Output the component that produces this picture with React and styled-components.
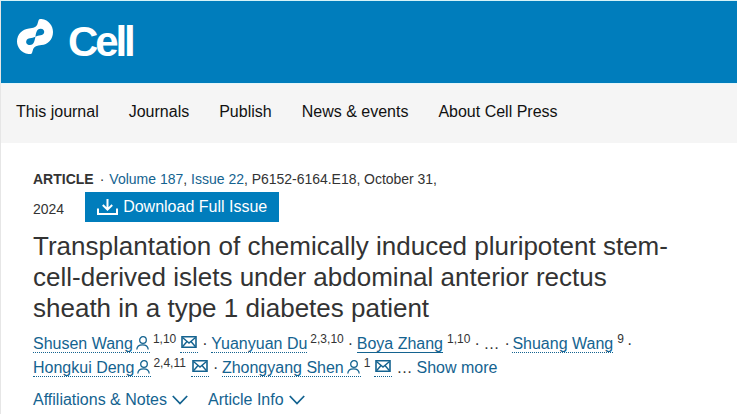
import React from "react";
import styled, { createGlobalStyle } from "styled-components";

const colors = {
  brand: "#007dbc",
  link: "#146390",
  text: "#333333",
  nav: "#f5f5f5",
};

const GlobalStyle = createGlobalStyle`
  * { box-sizing: border-box; }
  body {
    margin: 0;
    background: #fff;
    color: ${colors.text};
    font-family: "Liberation Sans", Arial, sans-serif;
  }
`;

const Page = styled.div`
  width: 737px;
  height: 414px;
  overflow: hidden;
  border-left: 1px solid #e6e6e6;
  border-top: 1px solid #d5f3f8;
`;

const Header = styled.header`
  display: flex;
  align-items: flex-start;
  height: 82px;
  padding: 17px 0 0 15px;
  background: ${colors.brand};
  color: #fff;
`;

const Brand = styled.span`
  margin: 2px 0 0 14px;
  font-size: 42px;
  font-weight: 700;
  line-height: 44px;
  letter-spacing: -3.1px;
`;

const Nav = styled.nav`
  display: flex;
  gap: 30px;
  height: 60px;
  padding: 19px 0 0 15px;
  background: ${colors.nav};
  border-top: 1px solid #e4f6fa;
`;

const NavLink = styled.a`
  color: #111;
  font-size: 16px;
  line-height: 18px;
  white-space: nowrap;
`;

const Article = styled.main`
  padding: 26px 0 0 32px;
`;

const MetaRow = styled.div`
  display: flex;
  align-items: ${(p) => p.$align || "flex-start"};
  height: ${(p) => p.$height}px;
  font-size: 14px;
  line-height: 20px;
  white-space: pre;
`;

const MetaText = styled.span`
  margin-left: ${(p) => p.$gap || 0}px;
  padding-top: ${(p) => p.$drop || 0}px;
  color: ${(p) => (p.$link ? colors.link : colors.text)};
  font-weight: ${(p) => (p.$bold ? 700 : 400)};
  letter-spacing: ${(p) => p.$track || 0}px;
`;

const DownloadButton = styled.a`
  display: flex;
  align-items: center;
  width: 194px;
  height: 30px;
  margin-left: 21px;
  padding: 0 0 1px 12px;
  gap: 5px;
  background: ${colors.brand};
  color: #fff;
  font-size: 16px;
`;

const Title = styled.h1`
  width: 650px;
  margin: 9px 0 10px;
  font-size: 26px;
  font-weight: 400;
  line-height: 31px;
`;

const AuthorRow = styled.div`
  display: flex;
  height: 24px;
  font-size: 16px;
  line-height: 19px;
  white-space: nowrap;
`;

const AuthorLink = styled.a`
  display: flex;
  height: 19px;
  margin-left: ${(p) => p.$gap || 0}px;
  color: ${colors.link};
  border-bottom: 1px ${(p) => p.$line || "dotted"} ${colors.link};

  svg {
    margin: 2px 1px 0 3px;
  }
`;

const MailLink = styled.a`
  display: flex;
  justify-content: center;
  width: 18px;
  height: 19px;
  margin-left: ${(p) => p.$gap}px;
  padding-top: 2px;
  border-bottom: 1px dotted ${colors.link};
`;

const Sup = styled.sup`
  margin: -1px 0 0 ${(p) => p.$gap}px;
  font-size: 12px;
  line-height: 12px;
`;

const Sep = styled.span`
  margin-left: ${(p) => p.$gap}px;
  width: ${(p) => p.$width || 4}px;
`;

const TextLink = styled.a`
  margin-left: ${(p) => p.$gap}px;
  color: ${colors.link};
`;

const InfoRow = styled.div`
  display: flex;
  gap: 20px;
  margin-top: 9px;
`;

const InfoToggle = styled.a`
  display: flex;
  align-items: center;
  gap: 5px;
  color: ${colors.link};
  font-size: 16px;
  line-height: 18px;
`;

const CellLogo = () => (
  <svg width="38" height="38" viewBox="16 18 38 38">
    <path
      d="M41.500 19C49 20 53 26 53 32C53 40 47.500 44.500 41.500 45C37 45.400 34 46.500 33.200 49L32 53C31.500 54.200 30.500 54.200 28.500 54C21.500 53 17 47.500 17 41.500C17 34 22.500 29 29 28.400C33.500 28 36.500 27 37.300 24.500L38.500 20.500C39 19.200 40 18.800 41.500 19Z"
      fill="#fff"
    />
    <path
      d="M35.400 36.700C36 34 36.200 28.800 40.600 28.800C43.300 28.800 44.700 30.700 44.100 32.700C43.200 35.900 38.500 34.800 35.400 36.700ZM35.400 36.700C34.800 39.500 34.300 45 29.900 45C27.100 45 25.700 43 26.300 40.900C27.400 37.500 32 38.500 35.400 36.700Z"
      fill={colors.brand}
    />
  </svg>
);

const DownloadIcon = () => (
  <svg width="21" height="18" viewBox="0 0 21 18" fill="none" stroke="#fff" strokeWidth="2">
    <path d="M10.500 1V11M5.800 7L10.500 11.700L15.200 7" />
    <path d="M1 10.500V16H20V10.500" />
  </svg>
);

const PersonIcon = () => (
  <svg width="13" height="14" viewBox="0 0 13 14" fill="none" stroke={colors.link} strokeWidth="1.300">
    <circle cx="7" cy="4" r="3.300" />
    <path d="M0.800 13.500C1 10 3.500 8.800 6.500 8.800S12 10 12.200 13.500" />
  </svg>
);

const MailIcon = () => (
  <svg width="16" height="12" viewBox="0 0 16 12" fill="none" stroke={colors.link} strokeWidth="1.400">
    <path d="M1 0.800H15V11.200H1Z" strokeWidth="1.600" />
    <path d="M1.500 1.500L8 7L14.500 1.500M1.500 10.800L6 5.500M14.500 10.800L10 5.500" />
  </svg>
);

const ChevronIcon = () => (
  <svg width="16" height="10" viewBox="0 0 16 10" fill="none" stroke={colors.link} strokeWidth="1.800">
    <path d="M0.800 1L8 8.500L15.200 1" />
  </svg>
);

const navItems = ["This journal", "Journals", "Publish", "News & events", "About Cell Press"];

const App = () => (
  <>
    <GlobalStyle />
    <Page>
      <Header>
        <CellLogo />
        <Brand>Cell</Brand>
      </Header>
      <Nav>
        {navItems.map((item) => (
          <NavLink key={item}>{item}</NavLink>
        ))}
      </Nav>
      <Article>
        <MetaRow $height={23}>
          <MetaText $bold>ARTICLE</MetaText>
          <MetaText $gap={6}>·</MetaText>
          <MetaText $gap={5} $link>Volume 187</MetaText>
          <MetaText>, </MetaText>
          <MetaText $link>Issue 22</MetaText>
          <MetaText $track={-0.03}>, P6152-6164.E18, October 31,</MetaText>
        </MetaRow>
        <MetaRow $height={30} $align="center">
          <MetaText $drop={4}>2024</MetaText>
          <DownloadButton>
            <DownloadIcon />
            Download Full Issue
          </DownloadButton>
        </MetaRow>
        <Title>
          Transplantation of chemically induced pluripotent stem-
          <br />
          cell-derived islets under abdominal anterior rectus
          <br />
          sheath in a type 1 diabetes patient
        </Title>
        <AuthorRow>
          <AuthorLink>Shusen Wang<PersonIcon /></AuthorLink>
          <Sup $gap={3}>1,10</Sup>
          <MailLink $gap={4}><MailIcon /></MailLink>
          <Sep $gap={4}>·</Sep>
          <AuthorLink $gap={5}>Yuanyuan Du</AuthorLink>
          <Sup $gap={3}>2,3,10</Sup>
          <Sep $gap={4}>·</Sep>
          <AuthorLink $gap={5} $line="solid">Boya Zhang</AuthorLink>
          <Sup $gap={4}>1,10</Sup>
          <Sep $gap={4}>·</Sep>
          <Sep $gap={5} $width={16}>…</Sep>
          <Sep $gap={5}>·</Sep>
          <AuthorLink $gap={4}>Shuang Wang</AuthorLink>
          <Sup $gap={4}>9</Sup>
          <Sep $gap={3}>·</Sep>
        </AuthorRow>
        <AuthorRow>
          <AuthorLink>Hongkui Deng<PersonIcon /></AuthorLink>
          <Sup $gap={2}>2,4,11</Sup>
          <MailLink $gap={5}><MailIcon /></MailLink>
          <Sep $gap={4}>·</Sep>
          <AuthorLink $gap={5}>Zhongyang Shen<PersonIcon /></AuthorLink>
          <Sup $gap={3}>1</Sup>
          <MailLink $gap={4}><MailIcon /></MailLink>
          <Sep $gap={4} $width={16}>…</Sep>
          <TextLink $gap={4}>Show more</TextLink>
        </AuthorRow>
        <InfoRow>
          <InfoToggle>Affiliations &amp; Notes<ChevronIcon /></InfoToggle>
          <InfoToggle>Article Info<ChevronIcon /></InfoToggle>
        </InfoRow>
      </Article>
    </Page>
  </>
);

export default App;
